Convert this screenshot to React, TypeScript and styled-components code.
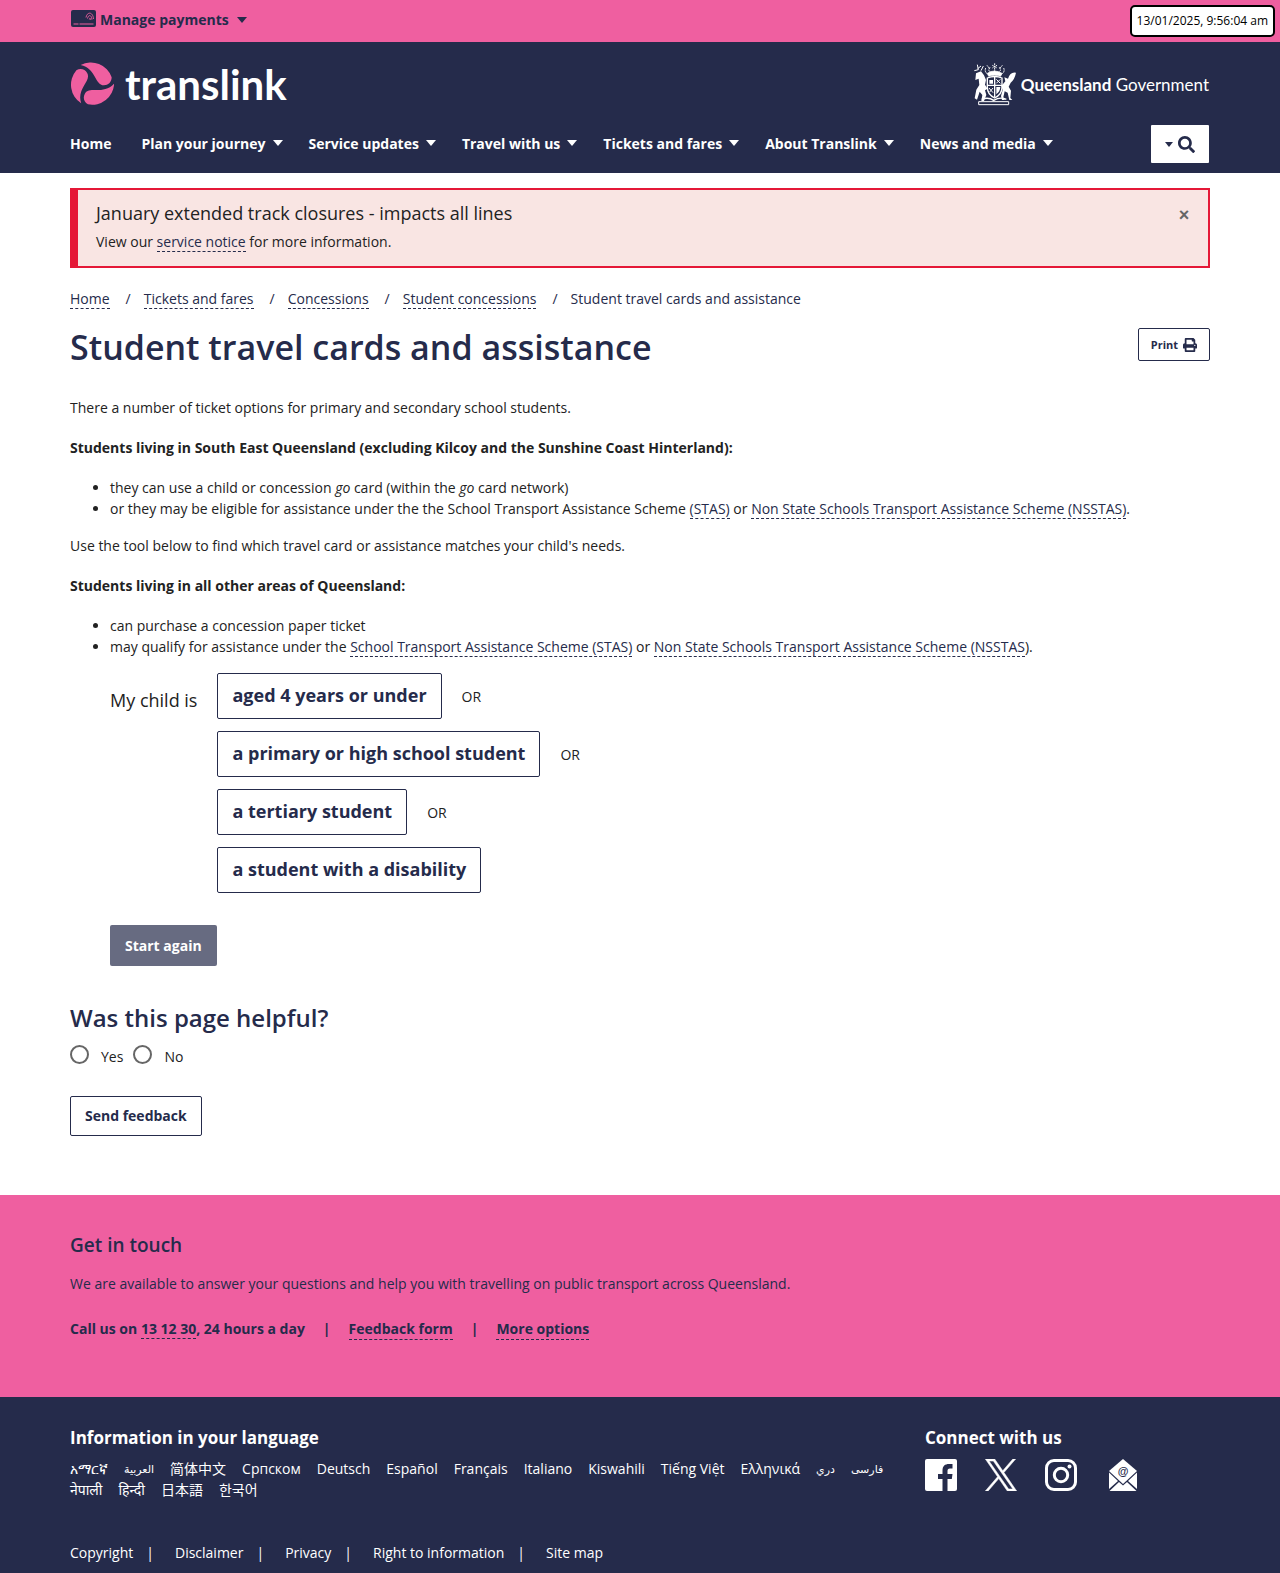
import React from "react";
import styled, { createGlobalStyle } from "styled-components";
import { FaPrint, FaSearch } from "react-icons/fa";

const navy = "#252b4b";
const pink = "#ef5fa0";
const bodyFont = `"Open Sans", "Noto Sans", "DejaVu Sans", "Noto Sans CJK SC", sans-serif`;
const logoFont = `Lato, "Open Sans", sans-serif`;

const GlobalStyle = createGlobalStyle`
  *, *::before, *::after { box-sizing: border-box; }
  body {
    margin: 0;
    background: #fff;
    color: #222;
    font: 400 14px/21px ${bodyFont};
  }
  button { font-family: inherit; cursor: pointer; }
  p, ul, h1, h2, h3 { margin: 0; }
`;

const Container = styled.div`
  max-width: 1140px;
  margin: 0 auto;
`;

const HeaderContainer = styled(Container)`
  padding-right: 1px;
`;

const TopBar = styled.div`
  background: ${pink};
  height: 42px;
`;

const PaymentsButton = styled.button`
  display: flex;
  align-items: center;
  height: 39px;
  padding: 0;
  border: 0;
  background: none;
  color: ${navy};
  font-size: 14px;
  font-weight: 700;
  line-height: 21px;
  gap: 3px;
`;

const Caret = styled.span<{ $gap?: number; $small?: boolean }>`
  display: inline-block;
  border: solid transparent;
  border-width: ${(p) => (p.$small ? "5px 4px 0" : "6px 5px 0")};
  border-top-color: currentColor;
  margin-left: ${(p) => p.$gap ?? 0}px;
`;

const Clock = styled.time`
  position: absolute;
  top: 5px;
  right: 5px;
  padding: 4px 5px;
  border: 2px solid #000;
  border-radius: 5px;
  background: #fff;
  color: #000;
  font-size: 12px;
  line-height: 20px;
`;

const Header = styled.header`
  background: ${navy};
  color: #fff;
  padding: 20px 0 10px;
`;

const BrandRow = styled.div`
  display: flex;
  align-items: center;
  justify-content: space-between;
`;

const Brand = styled.a`
  display: flex;
  align-items: center;
  gap: 11px;
  color: #fff;
  text-decoration: none;
  svg { display: block; }
`;

const Wordmark = styled.span`
  font: 700 42px/44px ${logoFont};
`;

const GovText = styled.span`
  padding-top: 2px;
  font: 400 17px/42px ${logoFont};
  strong { font-weight: 700; }
`;

const Government = styled(Brand)`
  gap: 4px;
`;

const NavRow = styled.nav`
  display: flex;
  align-items: center;
  justify-content: space-between;
  margin-top: 19px;
`;

const NavList = styled.ul`
  display: flex;
  list-style: none;
  padding: 0 0 2px;
  gap: 15px;
`;

const NavLink = styled.a<{ $menu?: boolean }>`
  display: flex;
  align-items: center;
  padding-right: ${(p) => (p.$menu ? 11 : 15)}px;
  color: #fff;
  font-weight: 700;
  text-decoration: none;
  white-space: nowrap;
`;

const SearchButton = styled.button`
  display: flex;
  align-items: center;
  justify-content: center;
  gap: 5px;
  width: 58px;
  height: 38px;
  padding: 0;
  border: 0;
  border-radius: 1px;
  background: #fff;
  color: ${navy};
`;

const TextLink = styled.a`
  color: ${navy};
  text-decoration: none;
  border-bottom: 1px dashed ${navy};
`;

const Alert = styled.section`
  display: flex;
  justify-content: space-between;
  align-items: flex-start;
  margin: 15px 0 20px;
  padding: 11px 18px 14px;
  border: 2px solid #e51837;
  border-left-width: 8px;
  background: #f9e5e3;
`;

const AlertTitle = styled.h2`
  font-size: 18px;
  font-weight: 400;
  line-height: 25px;
  margin-bottom: 5px;
`;

const CloseButton = styled.button`
  padding: 0;
  width: 12px;
  border: 0;
  background: none;
  color: #666;
  font: 700 18px/28px "Liberation Sans", Arial, sans-serif;
`;

const Breadcrumbs = styled.ol`
  display: flex;
  list-style: none;
  margin: 0;
  padding: 0;
  color: ${navy};
  li + li::before {
    content: "/";
    padding: 0 13px 0 16px;
  }
`;

const TitleRow = styled.div`
  display: flex;
  align-items: flex-start;
  justify-content: space-between;
  margin-top: 19px;
`;

const PageTitle = styled.h1`
  color: ${navy};
  font-size: 34px;
  font-weight: 600;
  line-height: 38px;
`;

const OutlineButton = styled.button<{ $size?: "small" | "large" }>`
  display: flex;
  align-items: center;
  gap: 5px;
  border: 1px solid ${navy};
  border-radius: 2px;
  background: #fff;
  color: ${navy};
  font-weight: 700;
  font-size: ${(p) => (p.$size === "small" ? 11 : p.$size === "large" ? 18 : 14)}px;
  line-height: ${(p) => (p.$size === "small" ? 17 : p.$size === "large" ? 26 : 20)}px;
  padding: ${(p) => (p.$size === "small" ? "7px 12px" : p.$size === "large" ? "8px 14px 10px" : "9px 14px")};
`;

const Article = styled.div`
  margin-top: 31px;
  p { margin-bottom: 19px; }
  ul {
    padding-left: 40px;
    margin-bottom: 16px;
  }
`;

const Question = styled.div`
  display: flex;
  align-items: flex-start;
  gap: 20px;
  padding-left: 40px;
  > span {
    padding-top: 14px;
    font-size: 18px;
    line-height: 26px;
  }
`;

const Choices = styled.div`
  display: grid;
  gap: 12px;
  justify-items: start;
`;

const Choice = styled.div`
  display: flex;
  align-items: center;
  gap: 20px;
`;

const StartButton = styled.button`
  display: block;
  margin: 32px 0 0 40px;
  padding: 10px 15px;
  border: 0;
  border-radius: 2px;
  background: #676b81;
  color: #fff;
  font-weight: 700;
  font-size: 14px;
  line-height: 21px;
`;

const Feedback = styled.form`
  margin-top: 36px;
  padding-bottom: 59px;
`;

const FormTitle = styled.h2`
  color: ${navy};
  font-size: 24px;
  font-weight: 600;
  line-height: 32px;
`;

const Radios = styled.fieldset`
  display: flex;
  gap: 10px;
  margin: 11px 0 29px;
  padding: 0;
  border: 0;
`;

const RadioLabel = styled.label`
  display: flex;
  align-items: flex-end;
  gap: 12px;
  line-height: 21px;
  input {
    appearance: none;
    width: 19px;
    height: 19px;
    margin: 0 0 3px;
    border: 2px solid #666;
    border-radius: 50%;
    background: #fff;
  }
  input:checked { box-shadow: inset 0 0 0 3px #fff; background: ${navy}; }
`;

const Contact = styled.section`
  background: ${pink};
  color: ${navy};
  padding: 37px 0 57px;
`;

const ContactTitle = styled.h2`
  font-size: 19px;
  font-weight: 600;
  line-height: 26px;
  margin-bottom: 15px;
`;

const ContactLinks = styled.div`
  display: flex;
  gap: 18px;
  margin-top: 24px;
  font-weight: 700;
`;

const Footer = styled.footer`
  background: ${navy};
  color: #fff;
  padding: 29px 0 10px;
`;

const FooterTop = styled.div`
  display: grid;
  grid-template-columns: 3fr 1fr;
`;

const FooterTitle = styled.h2`
  font-size: 17px;
  font-weight: 700;
  line-height: 24px;
  margin-bottom: 8px;
`;

const Languages = styled.ul`
  display: flex;
  flex-wrap: wrap;
  gap: 0 16px;
  list-style: none;
  padding: 0 30px 0 0;
`;

const Language = styled.li<{ $arabic?: boolean }>`
  height: 21px;
  font-size: ${(p) => (p.$arabic ? 11 : 14)}px;
`;

const FooterLink = styled.a`
  color: #fff;
  text-decoration: none;
`;

const Social = styled.div`
  display: flex;
  gap: 28px;
  padding-top: 1px;
  a { display: block; height: 32px; color: #fff; }
  svg { display: block; }
`;

const LegalLinks = styled.ul`
  display: flex;
  list-style: none;
  padding: 0;
  margin-top: 42px;
  li + li::before {
    content: "|";
    padding: 0 21px 0 13px;
  }
`;

function CardIcon() {
  return (
    <svg width="27" height="19" viewBox="0 0 27 19" aria-hidden="true">
      <rect x="1" y="0" width="25" height="17" rx="2" fill={navy} />
      <path d="M3.500 14h5M9.500 14h14" stroke={pink} strokeWidth="1" fill="none" />
      <path d="M16 7.500c1-6 7-6 7.500 1.500M17.500 8.500c.8-4 4-4 4.500 1M19.300 9.500c.2-1.700 1.200-1.700 1.500.5" stroke={pink} strokeWidth=".9" fill="none" />
    </svg>
  );
}

function TranslinkLogo() {
  const blade = "M-34-57A66 66 0 0 1 59-20C59-5 48 4 36 4C8 4 12-48-34-57Z";
  return (
    <svg width="44" height="44" viewBox="-66 -66 132 132" fill={pink} aria-hidden="true">
      <path d={blade} />
      <path d={blade} transform="rotate(120)" />
      <path d={blade} transform="rotate(240)" />
    </svg>
  );
}

function CoatOfArms() {
  return (
    <svg width="44" height="44" viewBox="0 0 132 132" fill="#fff" stroke="#fff" aria-hidden="true">
      <path d="M43 34q20-14 44 0l-4 9q-18-7-36 0z" strokeWidth="2" />
      <path d="M65 4v28M58 10l14 8M72 10l-14 8M51 16q-8 10 3 16M79 16q8 10-3 16M38 18q-5 12 8 20M92 18q5 12-8 20M42 10l8 10M88 10l-8 10" fill="none" strokeWidth="3" strokeDasharray="5 2" />
      <path d="M43 48q22-9 44 0v28q0 22-22 32Q43 98 43 76z" fill="none" strokeWidth="4" />
      <path d="M65 44v62M43 70h44" strokeWidth="4" />
      <path d="M49 54h11v11H49zM70 75h12q-1 14-12 22z" stroke="none" />
      <path d="M70 52l12 12M82 52L70 64M48 78l12 14M60 78L50 90" fill="none" strokeWidth="3" />
      <path d="M4 26l12-3-3-15M14 20l10-8M24 26l7-14" fill="none" strokeWidth="3" />
      <path d="M9 34l15-6 9 12 6 14-3 14 8 12-8 5 4 14-7 18h-8l3-18-8-10-8 24-7-4 5-26 9-14-2-19-10 4z" stroke="none" />
      <path d="M129 32q-4 20-16 30l-6 12 7 12-2 22 6 6h-9l-5-22-9-4-4 18 5 8h-9l-3-12 5-18-4-12 12-14-3-12 11 4q7-22 24-18z" stroke="none" />
      <path d="M17 119h90M17 128h90M17 119v9M107 119v9" fill="none" strokeWidth="3" />
      <path d="M26 112q20-8 36 3 20-12 38-3" fill="none" strokeWidth="4" />
    </svg>
  );
}

function FacebookIcon() {
  return (
    <svg width="32" height="32" viewBox="0 0 32 32" aria-hidden="true">
      <rect width="32" height="32" rx="2" fill="#fff" />
      <path d="M17.500 32V20H13v-5h4.500v-3.500c0-4.500 2.500-6.500 6.500-6.500h3.500v4.500H25c-2 0-2.500 1-2.500 2.500v3h5l-.7 5h-4.300v12z" fill={navy} />
    </svg>
  );
}

function XIcon() {
  return (
    <svg width="32" height="32" viewBox="0 0 1200 1227" fill="#fff" stroke="#fff" strokeWidth="20" aria-hidden="true">
      <path d="M714.163 519.284L1160.890 0H1055.030L667.137 450.887L357.328 0H0L468.492 681.821L0 1226.370H105.866L515.491 750.218L842.672 1226.370H1200L714.137 519.284ZM569.165 687.828L521.697 619.934L144.011 79.694H306.615L611.412 515.685L658.880 583.579L1055.080 1150.300H892.476Z" />
    </svg>
  );
}

function InstagramIcon() {
  return (
    <svg width="32" height="32" viewBox="0 0 32 32" fill="none" stroke="#fff" strokeWidth="3" aria-hidden="true">
      <rect x="1.500" y="1.500" width="29" height="29" rx="7.500" />
      <circle cx="16" cy="16" r="6.700" />
      <circle cx="24.500" cy="7.500" r="2" fill="#fff" stroke="none" />
    </svg>
  );
}

function MailIcon() {
  return (
    <svg width="34" height="32" viewBox="0 0 34 32" aria-hidden="true">
      <path d="M18 0L32 12L18 25L4 12Z" fill="#fff" />
      <path d="M4 13.500L13 22L4 30ZM32 13.500L23 22L32 30ZM4.500 32L14 23L18 26.500L22 23L31.500 32Z" fill="#fff" />
      <text x="18" y="16" textAnchor="middle" fontFamily="Liberation Sans, Arial, sans-serif" fontWeight="700" fontSize="11" fill={navy}>@</text>
    </svg>
  );
}

const menus = ["Plan your journey", "Service updates", "Travel with us", "Tickets and fares", "About Translink", "News and media"];
const crumbs = ["Home", "Tickets and fares", "Concessions", "Student concessions"];
const choices = ["aged 4 years or under", "a primary or high school student", "a tertiary student", "a student with a disability"];
const languages: [string, string][] = [
  ["am", "አማርኛ"], ["ar", "العربية"], ["zh-Hans", "简体中文"], ["sr", "Српском"], ["de", "Deutsch"],
  ["es", "Español"], ["fr", "Français"], ["it", "Italiano"], ["sw", "Kiswahili"], ["vi", "Tiếng Việt"],
  ["el", "Ελληνικά"], ["prs", "دري"], ["fa", "فارسی"], ["ne", "नेपाली"], ["hi", "हिन्दी"], ["ja", "日本語"], ["ko", "한국어"],
];
const arabicScript = ["ar", "prs", "fa"];
const legal = ["Copyright", "Disclaimer", "Privacy", "Right to information", "Site map"];

export default function App() {
  return (
    <>
      <GlobalStyle />
      <TopBar>
        <Container>
          <PaymentsButton type="button">
            <CardIcon />
            Manage payments
            <Caret $gap={5} />
          </PaymentsButton>
        </Container>
        <Clock>13/01/2025, 9:56:04 am</Clock>
      </TopBar>

      <Header>
        <HeaderContainer>
          <BrandRow>
            <Brand href="#" aria-label="Translink home">
              <TranslinkLogo />
              <Wordmark>translink</Wordmark>
            </Brand>
            <Government href="#">
              <CoatOfArms />
              <GovText><strong>Queensland</strong> Government</GovText>
            </Government>
          </BrandRow>
          <NavRow>
            <NavList>
              <li><NavLink href="#">Home</NavLink></li>
              {menus.map((m) => (
                <li key={m}><NavLink href="#" $menu>{m}<Caret $gap={7} /></NavLink></li>
              ))}
            </NavList>
            <SearchButton type="button" aria-label="Search">
              <Caret $small />
              <FaSearch size={17} />
            </SearchButton>
          </NavRow>
        </HeaderContainer>
      </Header>

      <Container as="main">
        <Alert>
          <div>
            <AlertTitle>January extended track closures - impacts all lines</AlertTitle>
            <p>View our <TextLink href="#">service notice</TextLink> for more information.</p>
          </div>
          <CloseButton type="button" aria-label="Close">×</CloseButton>
        </Alert>

        <Breadcrumbs>
          {crumbs.map((c) => (
            <li key={c}><TextLink href="#">{c}</TextLink></li>
          ))}
          <li>Student travel cards and assistance</li>
        </Breadcrumbs>

        <TitleRow>
          <PageTitle>Student travel cards and assistance</PageTitle>
          <OutlineButton type="button" $size="small">Print <FaPrint size={14} /></OutlineButton>
        </TitleRow>

        <Article>
          <p>There a number of ticket options for primary and secondary school students.</p>
          <p><strong>Students living in South East Queensland (excluding Kilcoy and the Sunshine Coast Hinterland):</strong></p>
          <ul>
            <li>they can use a child or concession <em>go</em> card (within the <em>go</em> card network)</li>
            <li>
              or they may be eligible for assistance under the the School Transport Assistance Scheme{" "}
              <TextLink href="#">(STAS)</TextLink> or{" "}
              <TextLink href="#">Non State Schools Transport Assistance Scheme (NSSTAS)</TextLink>.
            </li>
          </ul>
          <p>Use the tool below to find which travel card or assistance matches your child's needs.</p>
          <p><strong>Students living in all other areas of Queensland:</strong></p>
          <ul>
            <li>can purchase a concession paper ticket</li>
            <li>
              may qualify for assistance under the{" "}
              <TextLink href="#">School Transport Assistance Scheme (STAS)</TextLink> or{" "}
              <TextLink href="#">Non State Schools Transport Assistance Scheme (NSSTAS</TextLink>).
            </li>
          </ul>
        </Article>

        <Question>
          <span>My child is</span>
          <Choices>
            {choices.map((c, i) => (
              <Choice key={c}>
                <OutlineButton type="button" $size="large">{c}</OutlineButton>
                {i < choices.length - 1 && <span>OR</span>}
              </Choice>
            ))}
          </Choices>
        </Question>
        <StartButton type="button">Start again</StartButton>

        <Feedback>
          <FormTitle id="helpful">Was this page helpful?</FormTitle>
          <Radios aria-labelledby="helpful">
            <RadioLabel><input type="radio" name="helpful" value="yes" />Yes</RadioLabel>
            <RadioLabel><input type="radio" name="helpful" value="no" />No</RadioLabel>
          </Radios>
          <OutlineButton type="button">Send feedback</OutlineButton>
        </Feedback>
      </Container>

      <Contact>
        <Container>
          <ContactTitle>Get in touch</ContactTitle>
          <p>We are available to answer your questions and help you with travelling on public transport across Queensland.</p>
          <ContactLinks>
            <span>Call us on <TextLink href="#">13 12 30</TextLink>, 24 hours a day</span>
            <span>|</span>
            <TextLink href="#">Feedback form</TextLink>
            <span>|</span>
            <TextLink href="#">More options</TextLink>
          </ContactLinks>
        </Container>
      </Contact>

      <Footer>
        <Container>
          <FooterTop>
            <div>
              <FooterTitle>Information in your language</FooterTitle>
              <Languages>
                {languages.map(([code, name]) => (
                  <Language key={code} lang={code} $arabic={arabicScript.includes(code)}>
                    <FooterLink href="#">{name}</FooterLink>
                  </Language>
                ))}
              </Languages>
            </div>
            <div>
              <FooterTitle>Connect with us</FooterTitle>
              <Social>
                <a href="#" aria-label="Facebook"><FacebookIcon /></a>
                <a href="#" aria-label="X"><XIcon /></a>
                <a href="#" aria-label="Instagram"><InstagramIcon /></a>
                <a href="#" aria-label="Email"><MailIcon /></a>
              </Social>
            </div>
          </FooterTop>
          <LegalLinks>
            {legal.map((l) => (
              <li key={l}><FooterLink href="#">{l}</FooterLink></li>
            ))}
          </LegalLinks>
        </Container>
      </Footer>
    </>
  );
}
